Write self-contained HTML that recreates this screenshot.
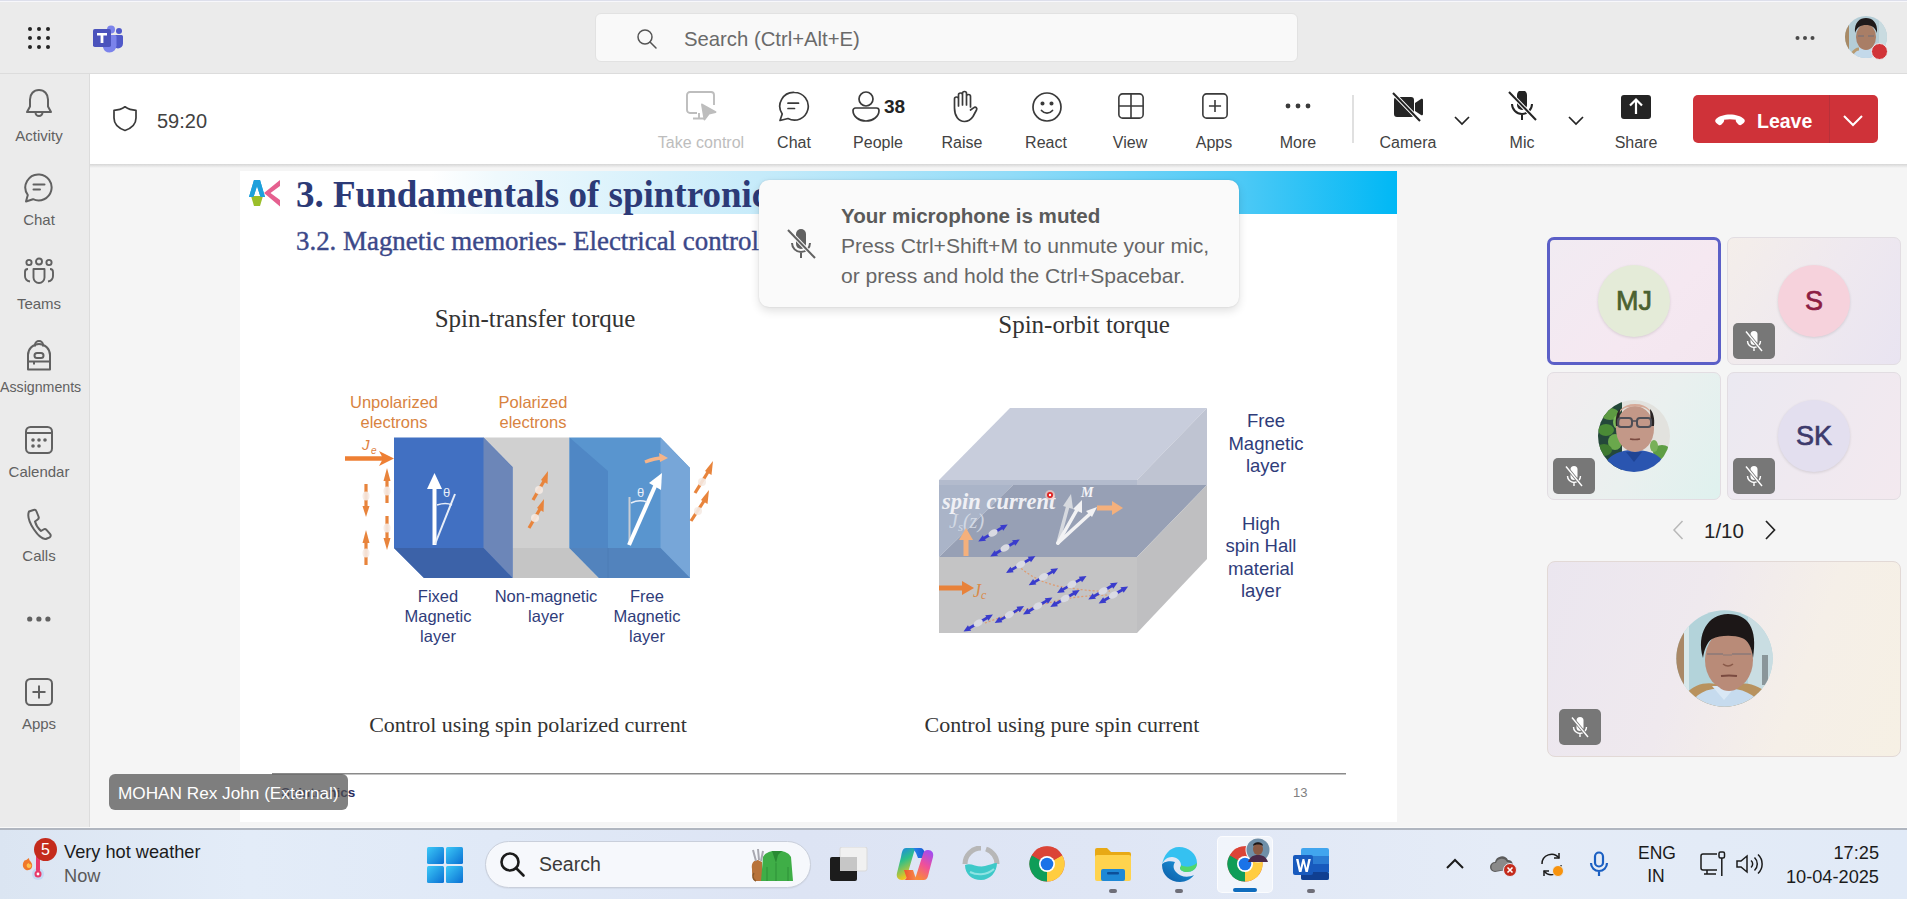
<!DOCTYPE html>
<html><head><meta charset="utf-8">
<style>
*{margin:0;padding:0;box-sizing:border-box}
html,body{width:1907px;height:899px;overflow:hidden;background:#f5f5f5;font-family:"Liberation Sans",sans-serif;position:relative}
.a{position:absolute}
#topline{left:0;top:0;width:1907px;height:2px;background:linear-gradient(#dddfeb 50%,#f7f7fb 50%)}
#topbar{left:0;top:2px;width:1907px;height:71px;background:#ebebeb}
#topborder{left:0;top:73px;width:1907px;height:1px;background:#dcdcdc}
#rail{left:0;top:74px;width:89px;height:754px;background:#ebebeb}
#railborder{left:89px;top:74px;width:1px;height:754px;background:#dcdcdc}
#toolbar{left:90px;top:74px;width:1817px;height:90px;background:#fff}
#tbshadow{left:90px;top:164px;width:1817px;height:4px;background:linear-gradient(#d6d6d6,#f5f5f5)}
#stage{left:90px;top:168px;width:1817px;height:660px;background:#f5f5f5}
#slide{left:240px;top:171px;width:1157px;height:651px;background:#fff;overflow:hidden}
#taskline{left:0;top:827px;width:1907px;height:3px;background:linear-gradient(#f9f9f9 33%,#b0b6c0 33%)}
#taskbar{left:0;top:830px;width:1907px;height:69px;background:linear-gradient(90deg,#dbe5f2 0%,#e3ecf8 13%,#e0e9f7 26%,#dde4f4 42%,#dfe6f5 58%,#e5ecf7 79%,#e1eaf7 100%)}
.lbl{font-size:16px;color:#424242;white-space:nowrap;text-align:center}
.rl{font-size:15px;color:#616161;white-space:nowrap;text-align:center;width:78px;left:0}
</style></head><body>
<div class="a" id="topline"></div>
<div class="a" id="topbar"></div>
<div class="a" id="topborder"></div>
<div class="a" id="rail"></div>
<div class="a" id="railborder"></div>
<div class="a" id="toolbar"></div>
<div class="a" id="tbshadow"></div>
<div class="a" id="stage"></div>
<div class="a" id="slide"></div>
<div class="a" id="taskline"></div>
<div class="a" id="taskbar"></div>

<!-- TOP BAR -->
<svg class="a" style="left:25px;top:24px" width="28" height="28" viewBox="0 0 28 28" fill="#242424">
<circle cx="5" cy="5" r="2"/><circle cx="14" cy="5" r="2"/><circle cx="23" cy="5" r="2"/>
<circle cx="5" cy="14" r="2"/><circle cx="14" cy="14" r="2"/><circle cx="23" cy="14" r="2"/>
<circle cx="5" cy="23" r="2"/><circle cx="14" cy="23" r="2"/><circle cx="23" cy="23" r="2"/>
</svg>
<svg class="a" style="left:92px;top:24px" width="32" height="30" viewBox="0 0 32 30">
<circle cx="19" cy="5.5" r="4" fill="#7b83eb"/>
<circle cx="27" cy="7" r="3" fill="#5059c9"/>
<path d="M21 11h8.5a1.5 1.5 0 0 1 1.5 1.5v7a5 5 0 0 1-5 5h0a5 5 0 0 1-5-5z" fill="#5059c9"/>
<path d="M13 11h10a1.5 1.5 0 0 1 1.5 1.5v9a7 7 0 0 1-7 7a7 7 0 0 1-6.5-5z" fill="#7b83eb"/>
<rect x="1" y="5" width="18" height="18" rx="1.8" fill="#4b53bc"/>
<path d="M5 9h10v2.5h-3.6V19H8.6v-7.5H5z" fill="#fff"/>
</svg>
<div class="a" style="left:595px;top:13px;width:703px;height:49px;background:#f9f9f9;border:1px solid #e2e2e2;border-radius:6px"></div>
<svg class="a" style="left:636px;top:28px" width="22" height="22" viewBox="0 0 22 22" fill="none" stroke="#555" stroke-width="1.5">
<circle cx="9" cy="9" r="7"/><path d="M14 14l6 6" stroke-linecap="round"/>
</svg>
<div class="a" style="left:684px;top:28px;font-size:20.3px;color:#6a6a6a;white-space:nowrap">Search (Ctrl+Alt+E)</div>
<svg class="a" style="left:1793px;top:34px" width="24" height="8" viewBox="0 0 24 8" fill="#4a4a4a">
<circle cx="4.5" cy="4" r="2"/><circle cx="12" cy="4" r="2"/><circle cx="19.5" cy="4" r="2"/>
</svg>
<svg class="a" style="left:1845px;top:16px" width="42" height="42" viewBox="0 0 42 42">
<defs><clipPath id="c0"><circle cx="21" cy="21" r="21"/></clipPath></defs>
<g clip-path="url(#c0)">
<rect width="42" height="42" fill="#b4cdd6"/><rect x="0" y="0" width="4" height="42" fill="#a88a66"/><rect x="34" y="0" width="8" height="42" fill="#c9dbe0"/>
<path d="M4 42C6 34 12 31 21 31S36 34 38 42Z" fill="#c3d9ea"/>
<path d="M7 38C9 35 12 33 14 33" stroke="#b89a70" stroke-width="3" fill="none"/>
<ellipse cx="21" cy="21" rx="10" ry="13" fill="#a97e66"/>
<path d="M10 17C9 6 15 2 21 2S33 6 32 17C30 11 26 9 21 9S12 11 10 17Z" fill="#1f1a1a"/>
<path d="M13 20H19M23 20H29" stroke="#6e6f7a" stroke-width="1"/>
</g></svg>
<div class="a" style="left:1871px;top:43px;width:17px;height:17px;border-radius:50%;background:#d13438;border:1.5px solid #ebebeb"></div>

<!-- LEFT RAIL -->
<svg class="a" style="left:24px;top:88px" width="30" height="32" viewBox="0 0 30 32" fill="none" stroke="#616161" stroke-width="2" stroke-linejoin="round">
<path d="M15 2C9.5 2 6 6.2 6 11.5V18.5L3 24H27L24 18.5V11.5C24 6.2 20.5 2 15 2Z"/><path d="M11.5 24.5a3.5 3.5 0 0 0 7 0"/>
</svg>
<div class="a rl" style="top:127px">Activity</div>
<svg class="a" style="left:23px;top:172px" width="32" height="32" viewBox="0 0 32 32" fill="none" stroke="#616161" stroke-width="2" stroke-linejoin="round" stroke-linecap="round">
<path d="M16.5 2.5A13 13 0 1 1 10 27.2L3 29.5L4.8 23A13 13 0 0 1 16.5 2.5Z"/><path d="M10.5 12.5H21.5M10.5 17.5H17"/>
</svg>
<div class="a rl" style="top:211px">Chat</div>
<svg class="a" style="left:23px;top:257px" width="32" height="30" viewBox="0 0 32 30" fill="none" stroke="#616161" stroke-width="1.9" stroke-linejoin="round">
<circle cx="6" cy="5.5" r="2.6"/><circle cx="16" cy="4.5" r="3"/><circle cx="26" cy="5.5" r="2.6"/>
<path d="M5 12C2.5 12 2 13 2 15v4c0 3 2 5 5 5.5"/><path d="M27 12c2.5 0 3 1 3 3v4c0 3-2 5-5 5.5"/>
<path d="M10.5 12h11v8.5a5.5 5.5 0 0 1-11 0z"/>
</svg>
<div class="a rl" style="top:295px">Teams</div>
<svg class="a" style="left:25px;top:340px" width="28" height="32" viewBox="0 0 28 32" fill="none" stroke="#616161" stroke-width="2" stroke-linejoin="round">
<path d="M10 6.5V5a4 4 0 0 1 8 0v1.5"/><path d="M3 29.5V15a9 9 0 0 1 22 0v14.5z"/><rect x="9.5" y="13" width="9" height="5" rx="2.5"/><path d="M3 21.5H25M9 21.5v3"/>
</svg>
<div class="a rl" style="top:379px;font-size:14.2px">Assignments</div>
<svg class="a" style="left:24px;top:425px" width="30" height="30" viewBox="0 0 30 30" fill="none" stroke="#616161" stroke-width="2">
<rect x="2" y="2" width="26" height="26" rx="4.5"/><path d="M2 8H28"/>
<g fill="#616161" stroke="none"><circle cx="9" cy="15" r="1.8"/><circle cx="15" cy="15" r="1.8"/><circle cx="21" cy="15" r="1.8"/><circle cx="9" cy="21" r="1.8"/><circle cx="15" cy="21" r="1.8"/></g>
</svg>
<div class="a rl" style="top:463px">Calendar</div>
<svg class="a" style="left:25px;top:508px" width="28" height="32" viewBox="0 0 28 32" fill="none" stroke="#616161" stroke-width="2" stroke-linejoin="round">
<path d="M4 3.5L8.5 2c1.5-.5 2.5.2 3 1.5l2 5c.5 1.2.2 2.3-.8 3L10 13.5c.8 3 3.5 7.3 6 9.5l2.5-1.5c1-.6 2.2-.5 3 .4l3.5 4c1 1.1.9 2.5-.2 3.4L22 30.5C19 32 14 29 9 21.5S2.5 7 4 3.5Z"/>
</svg>
<div class="a rl" style="top:547px">Calls</div>
<svg class="a" style="left:25px;top:614px" width="28" height="10" viewBox="0 0 28 10" fill="#616161">
<circle cx="4.7" cy="5" r="2.6"/><circle cx="13.9" cy="5" r="2.6"/><circle cx="22.9" cy="5" r="2.6"/>
</svg>
<svg class="a" style="left:24px;top:677px" width="30" height="30" viewBox="0 0 30 30" fill="none" stroke="#616161" stroke-width="2">
<rect x="2" y="2" width="26" height="26" rx="4.5"/><path d="M15 8.5V21.5M8.5 15H21.5"/>
</svg>
<div class="a rl" style="top:715px">Apps</div>


<!-- TOOLBAR -->
<svg class="a" style="left:112px;top:105px" width="26" height="27" viewBox="0 0 26 27" fill="none" stroke="#3a3a3a" stroke-width="1.7" stroke-linejoin="round">
<path d="M13 1.8C9.5 4.3 6 5.2 2 5.3V13c0 6 4 10 11 12.5C20 23 24 19 24 13V5.3C20 5.2 16.5 4.3 13 1.8Z"/>
</svg>
<div class="a" style="left:157px;top:110px;font-size:20px;color:#424242;white-space:nowrap">59:20</div>

<svg class="a" style="left:685px;top:90px" width="34" height="34" viewBox="0 0 34 34" fill="none" stroke="#bdbdbd" stroke-width="1.9" stroke-linejoin="round">
<path d="M12 23H5a3 3 0 0 1-3-3V5a3 3 0 0 1 3-3h21a3 3 0 0 1 3 3v10"/><path d="M14 23v5M8 28.5h12"/>
<path d="M17 14.5l13.5 7.5l-6.5 1.5l-4.5 6z" fill="#bdbdbd"/>
</svg>
<div class="a lbl" style="left:651px;top:134px;width:100px;color:#bdbdbd">Take control</div>

<svg class="a" style="left:778px;top:91px" width="32" height="32" viewBox="0 0 32 32" fill="none" stroke="#3a3a3a" stroke-width="1.7" stroke-linejoin="round" stroke-linecap="round">
<path d="M16.5 1.5A13.8 13.8 0 1 1 10 27.5L2 29.5L4.2 23A13.8 13.8 0 0 1 16.5 1.5Z"/><path d="M10 12.2H20.5M10 17.5H16.5"/>
</svg>
<div class="a lbl" style="left:744px;top:134px;width:100px">Chat</div>

<svg class="a" style="left:851px;top:91px" width="30" height="32" viewBox="0 0 30 32" fill="none" stroke="#3a3a3a" stroke-width="1.7" stroke-linejoin="round">
<circle cx="15" cy="8" r="7"/><path d="M2 19.5a2.5 2.5 0 0 1 2.5-2.5h21a2.5 2.5 0 0 1 2.5 2.5c0 6-6 10.5-13 10.5S2 25.5 2 19.5Z"/>
</svg>
<div class="a" style="left:884px;top:96px;font-size:19px;font-weight:700;color:#242424;white-space:nowrap">38</div>
<div class="a lbl" style="left:828px;top:134px;width:100px">People</div>

<svg class="a" style="left:949px;top:90px;transform:scaleX(-1)" width="30" height="34" viewBox="0 0 30 34" fill="none" stroke="#3a3a3a" stroke-width="1.7" stroke-linejoin="round" stroke-linecap="round">
<path d="M8.5 17V6.5a2 2 0 0 1 4 0V15M12.5 15V3.5a2 2 0 0 1 4 0V15M16.5 15V5a2 2 0 0 1 4 0V16M20.5 16V9a2 2 0 0 1 4 0v9c0 8-4 13.5-10 13.5c-4 0-6.5-2-8.5-5L2.5 20c-1-1.6.5-3.3 2.2-2.6L8.5 20"/>
</svg>
<div class="a lbl" style="left:912px;top:134px;width:100px">Raise</div>

<svg class="a" style="left:1031px;top:91px" width="32" height="32" viewBox="0 0 32 32" fill="none" stroke="#3a3a3a" stroke-width="1.7" stroke-linecap="round">
<circle cx="16" cy="16" r="14"/><path d="M10.5 19.5c3 3.5 8 3.5 11 0"/><circle cx="11.5" cy="12.5" r="1.2" fill="#3a3a3a"/><circle cx="20.5" cy="12.5" r="1.2" fill="#3a3a3a"/>
</svg>
<div class="a lbl" style="left:996px;top:134px;width:100px">React</div>

<svg class="a" style="left:1117px;top:92px" width="28" height="28" viewBox="0 0 30 30" fill="none" stroke="#3a3a3a" stroke-width="1.7">
<rect x="2" y="2" width="26" height="26" rx="4"/><path d="M15 2V28M2 15H28"/>
</svg>
<div class="a lbl" style="left:1080px;top:134px;width:100px">View</div>

<svg class="a" style="left:1201px;top:92px" width="28" height="28" viewBox="0 0 30 30" fill="none" stroke="#3a3a3a" stroke-width="1.7">
<rect x="2" y="2" width="26" height="26" rx="4"/><path d="M15 8.5V21.5M8.5 15H21.5"/>
</svg>
<div class="a lbl" style="left:1164px;top:134px;width:100px">Apps</div>

<svg class="a" style="left:1284px;top:102px" width="28" height="8" viewBox="0 0 28 8" fill="#3a3a3a">
<circle cx="4" cy="4" r="2.4"/><circle cx="14" cy="4" r="2.4"/><circle cx="24" cy="4" r="2.4"/>
</svg>
<div class="a lbl" style="left:1248px;top:134px;width:100px">More</div>

<div class="a" style="left:1352px;top:95px;width:2px;height:48px;background:#e0e0e0"></div>

<svg class="a" style="left:1391px;top:92px" width="34" height="30" viewBox="0 0 34 30">
<path d="M3 8a3 3 0 0 1 3-3h14a3 3 0 0 1 3 3v14a3 3 0 0 1-3 3H6a3 3 0 0 1-3-3zM24 11l6-4c1-.6 2 0 2 1v14c0 1-1 1.6-2 1l-6-4z" fill="#242424"/>
<path d="M2 1L29 29" stroke="#fff" stroke-width="4"/><path d="M2 1L29 29" stroke="#242424" stroke-width="2"/>
</svg>
<svg class="a" style="left:1453px;top:115px" width="18" height="11" viewBox="0 0 18 11" fill="none" stroke="#242424" stroke-width="1.7"><path d="M2 2l7 7l7-7"/></svg>
<div class="a lbl" style="left:1358px;top:134px;width:100px">Camera</div>

<svg class="a" style="left:1506px;top:91px" width="32" height="32" viewBox="0 0 32 32">
<path d="M11 4a5 5 0 0 1 10 0v10a5 5 0 0 1-10 0z" fill="#242424"/>
<path d="M6 13a10 10 0 0 0 20 0M16 23v6" fill="none" stroke="#242424" stroke-width="2"/>
<path d="M3 1L30 29" stroke="#fff" stroke-width="4"/><path d="M3 1L30 29" stroke="#242424" stroke-width="2"/>
</svg>
<svg class="a" style="left:1567px;top:115px" width="18" height="11" viewBox="0 0 18 11" fill="none" stroke="#242424" stroke-width="1.7"><path d="M2 2l7 7l7-7"/></svg>
<div class="a lbl" style="left:1472px;top:134px;width:100px">Mic</div>

<svg class="a" style="left:1620px;top:94px" width="32" height="26" viewBox="0 0 32 26">
<rect x="1" y="1" width="30" height="24" rx="3" fill="#242424"/><path d="M16 20V6M10 11.5l6-6l6 6" fill="none" stroke="#fff" stroke-width="2.2"/>
</svg>
<div class="a lbl" style="left:1586px;top:134px;width:100px">Share</div>

<div class="a" style="left:1693px;top:95px;width:185px;height:48px;background:#cf3239;border-radius:5px"></div>
<div class="a" style="left:1829px;top:95px;width:1px;height:48px;background:#b8313a"></div>
<svg class="a" style="left:1714px;top:111px" width="32" height="18" viewBox="0 0 32 18">
<path d="M2 8C8 2 24 2 30 8c1.2 1.2 1 3-.3 4l-2 1.6c-1 .8-2.4.7-3.3-.2l-2-2.2c-.6-.7-.8-1.6-.5-2.4C18 8 14 8 10 8.8c.3.8.1 1.7-.5 2.4l-2 2.2c-.9.9-2.3 1-3.3.2L2.3 12C1 11 .8 9.2 2 8Z" fill="#fff"/>
</svg>
<div class="a" style="left:1757px;top:110px;font-size:19.5px;font-weight:700;color:#fff;white-space:nowrap">Leave</div>
<svg class="a" style="left:1842px;top:114px" width="22" height="14" viewBox="0 0 22 14" fill="none" stroke="#fff" stroke-width="2"><path d="M2 2l9 9l9-9"/></svg>


<!-- SLIDE -->
<svg class="a" style="left:240px;top:171px" width="1157" height="651" viewBox="240 171 1157 651">
<defs>
<linearGradient id="tband" x1="0" x2="1" y1="0" y2="0">
<stop offset="0" stop-color="#ffffff"/><stop offset="0.07" stop-color="#eff9fd"/><stop offset="0.34" stop-color="#c6ebfa"/><stop offset="0.6" stop-color="#92dcf8"/><stop offset="0.84" stop-color="#4cc9f6"/><stop offset="1" stop-color="#00b8f5"/>
</linearGradient>
<marker id="oh" markerWidth="4" markerHeight="4" refX="2" refY="2" orient="auto"><path d="M0 0L4 2L0 4z" fill="#e8823a"/></marker>
</defs>
<rect x="240" y="171" width="1157" height="651" fill="#fff"/>
<rect x="430" y="171" width="967" height="43" fill="url(#tband)"/>
<!-- logo -->
<path d="M249 197L254 180H260L265 197H260.5L257 186L253.5 197Z" fill="#1ea0dc"/>
<path d="M251 196H263L260 206H254Z" fill="#9bbf2a"/>
<path d="M249 197L254 180H260L265 197H260.5L257 186L253.5 197Z" fill="#1ea0dc"/>
<path d="M280 180V186L270.5 193L280 200V206.5L264 193Z" fill="#e5608f"/>
<text x="296" y="207" font-family="Liberation Serif" font-weight="700" font-size="37" fill="#2c3a77">3. Fundamentals of spintronics</text>
<text x="296" y="249.5" font-family="Liberation Serif" font-size="26.9" fill="#3b4889" stroke="#3b4889" stroke-width="0.4">3.2. Magnetic memories- Electrical control</text>
<text x="535" y="327" text-anchor="middle" font-family="Liberation Serif" font-size="25" fill="#333">Spin-transfer torque</text>
<text x="1084" y="333" text-anchor="middle" font-family="Liberation Serif" font-size="25" fill="#333">Spin-orbit torque</text>
<text x="528" y="732" text-anchor="middle" font-family="Liberation Serif" font-size="22" fill="#333">Control using spin polarized current</text>
<text x="1062" y="732" text-anchor="middle" font-family="Liberation Serif" font-size="22" fill="#333">Control using pure spin current</text>
<rect x="272" y="773" width="1074" height="1.5" fill="#8a8a8a"/>
<text x="281" y="797" font-family="Liberation Sans" font-weight="700" font-size="13.5" fill="#2a2c5e">Spintronics</text>
<text x="1293" y="797" font-family="Liberation Sans" font-size="13" fill="#808080">13</text>

<!-- LEFT FIGURE -->
<g font-family="Liberation Sans" font-size="16.5" text-anchor="middle">
<text x="394" y="408" fill="#d8833f">Unpolarized</text><text x="394" y="428" fill="#d8833f">electrons</text>
<text x="533" y="408" fill="#d8833f">Polarized</text><text x="533" y="428" fill="#d8833f">electrons</text>
<text x="438" y="602" fill="#2f3c7a">Fixed</text><text x="438" y="622" fill="#2f3c7a">Magnetic</text><text x="438" y="642" fill="#2f3c7a">layer</text>
<text x="546" y="602" fill="#2f3c7a">Non-magnetic</text><text x="546" y="622" fill="#2f3c7a">layer</text>
<text x="647" y="602" fill="#2f3c7a">Free</text><text x="647" y="622" fill="#2f3c7a">Magnetic</text><text x="647" y="642" fill="#2f3c7a">layer</text>
</g>
<!-- gray nonmagnetic -->
<path d="M483 437.5H569.5V548L599 578H512.5Z" fill="#d0d0d0"/>
<path d="M512.5 548H569.5L599 578H512.5Z" fill="#c5c5c5"/>
<!-- fixed block -->
<path d="M394 437.5H483.5L512.5 467V578H424L394 548Z" fill="#4170c2"/>
<path d="M483.5 437.5L512.5 467V578L483.5 548Z" fill="#6c86b8"/>
<path d="M394 548H483.5L512.5 578H424Z" fill="#3c62a8"/>
<!-- free block -->
<path d="M569.5 437.5H660.5L690 468V578H599L569.5 548Z" fill="#5995cf"/>
<path d="M569.5 437.5L608 471V578L569.5 548Z" fill="#4f87c5"/>
<path d="M660.5 437.5L690 468V578L660.5 548Z" fill="#77a6d8"/>
<path d="M569.5 548H660.5L690 578H599Z" fill="#5283bd"/>
<path d="M608 548V578" stroke="#4c7cb5" stroke-width="1"/>
<!-- Je arrow -->
<path d="M345 458.5H388" stroke="#ee7f33" stroke-width="4.5"/><path d="M379 451L394 458.5L379 466L383 458.5Z" fill="#ee7f33"/>
<text x="362" y="450" font-family="Liberation Sans" font-style="italic" font-size="15" fill="#e0823f">J</text><text x="371" y="454" font-family="Liberation Sans" font-style="italic" font-size="10" fill="#e0823f">e</text>
<!-- fixed arrow -->
<path d="M434.5 545V484" stroke="#fff" stroke-width="4"/><path d="M427 489L434.5 473L442 489Z" fill="#fff"/>
<path d="M435 544L455 494" stroke="#e8eef8" stroke-width="2"/>
<path d="M437 505Q446 502 452 505" stroke="#e8eef8" stroke-width="1.5" fill="none"/>
<text x="443" y="497" font-family="Liberation Sans" font-size="13" fill="#e8eef8">θ</text>
<!-- free arrow -->
<path d="M629.5 545V497" stroke="#c7ccd4" stroke-width="2"/>
<path d="M629 545L656 484" stroke="#fff" stroke-width="4"/><path d="M649 483L662 473L661 490Z" fill="#fff"/>
<path d="M631 503Q639 499 647 502" stroke="#e8eef8" stroke-width="1.5" fill="none"/>
<text x="637" y="497" font-family="Liberation Sans" font-size="13" fill="#e8eef8">θ</text>
<path d="M645 462Q655 458 663 458" stroke="#f5b489" stroke-width="3.5" fill="none"/><path d="M659 453L668 458L660 462Z" fill="#f5b489"/>
<!-- spins -->
<g stroke="#e8843c" stroke-width="3.2" fill="none">
<path d="M366 484V508"/><path d="M366 565V541"/><path d="M387 503V479"/><path d="M387 516V540"/>
<path d="M533 500L544 481"/><path d="M529 528L540 509"/><path d="M695 493L708 472"/><path d="M691 521L704 501"/>
</g>
<g fill="#e8843c">
<path d="M362.5 506L366 517L369.5 506Z"/><path d="M362.5 543L366 530L369.5 543Z"/><path d="M383.5 481L387 468L390.5 481Z"/><path d="M383.5 538L387 550L390.5 538Z"/>
<path d="M541 480L548 471L547.5 484Z"/><path d="M537 508L544 499L543.5 512Z"/><path d="M705 471L713 461L711.5 475Z"/><path d="M701 500L709 490L707.5 504Z"/>
</g>
<g fill="#f6ebe4" opacity="0.9">
<ellipse cx="366" cy="496" rx="3.5" ry="4.5"/><ellipse cx="366" cy="553" rx="3.5" ry="4.5"/><ellipse cx="387" cy="491" rx="3.5" ry="4.5"/><ellipse cx="387" cy="528" rx="3.5" ry="4.5"/>
<circle cx="539" cy="490" r="4"/><circle cx="535" cy="518" r="4"/><circle cx="702" cy="482" r="4"/><circle cx="698" cy="511" r="4"/>
</g>
</svg>


<!-- RIGHT FIGURE -->
<svg class="a" style="left:900px;top:380px" width="440" height="280" viewBox="900 380 440 280">
<defs>
<marker id="dum" markerWidth="1" markerHeight="1"></marker>
</defs>
<!-- top face -->
<path d="M939 480L1010 408H1207L1137 480Z" fill="#c8cddc"/>
<path d="M1137 480L1207 408V485H1137Z" fill="#bfc4d2"/>
<path d="M939 480H1137V485H939Z" fill="#b3bbcd"/>
<path d="M939 485H1013L939 557Z" fill="#aab4c8"/>
<path d="M1013 485H1207L1137 557H939Z" fill="#97a0b5"/>
<path d="M1137 557L1207 485V559L1137 633Z" fill="#bfbfc1"/>
<path d="M939 557H1137V633H939Z" fill="#c4c4c5"/>
<g font-family="Liberation Sans" font-size="18.5" text-anchor="middle" fill="#2f3c7a">
<text x="1266" y="427">Free</text><text x="1266" y="450">Magnetic</text><text x="1266" y="472">layer</text>
<text x="1261" y="530">High</text><text x="1261" y="552">spin Hall</text><text x="1261" y="575">material</text><text x="1261" y="597">layer</text>
</g>
<text x="942" y="509" font-family="Liberation Serif" font-style="italic" font-weight="700" font-size="22.5" fill="#f4f4f8" opacity="0.95">spin current</text>
<text x="949" y="528" font-family="Liberation Serif" font-style="italic" font-size="20" fill="#dde2ec" opacity="0.8">J<tspan font-size="13" dy="3">s</tspan><tspan dy="-3">(z)</tspan></text>
<!-- orange arrows -->
<path d="M966 556V538" stroke="#f4b07c" stroke-width="5"/><path d="M959 540L966 528L973 540Z" fill="#f4b07c"/>
<path d="M939 588H964" stroke="#e8823a" stroke-width="5"/><path d="M962 581L974 588L962 595Z" fill="#e8823a"/>
<text x="973" y="597" font-family="Liberation Serif" font-style="italic" font-size="18" fill="#d98a4a">J<tspan font-size="12" dy="2">c</tspan></text>
<path d="M1097 508H1114" stroke="#f4b07c" stroke-width="5"/><path d="M1112 501L1123 508L1112 515Z" fill="#f4b07c"/>
<!-- M arrows -->
<g stroke="#f2f2f4" stroke-width="3.5" fill="none" stroke-linecap="round">
<path d="M1058 543L1069 502" stroke="#d6d9df"/><path d="M1058 543L1078 508"/><path d="M1058 543L1092 512"/>
</g>
<g fill="#f2f2f4"><path d="M1063 506L1071 494L1073 509Z" fill="#d6d9df"/><path d="M1073 509L1082 500L1082 513Z"/><path d="M1086 511L1097 507L1092 517Z"/></g>
<text x="1081" y="497" font-family="Liberation Serif" font-style="italic" font-weight="700" font-size="14" fill="#f4f4f8">M</text>
<circle cx="1050" cy="495" r="5" fill="#f7c7c0" opacity="0.7"/><circle cx="1050" cy="495" r="3" fill="#e02020"/><circle cx="1050" cy="495" r="1.2" fill="#fff"/>
<!-- dotted paths -->
<g stroke="#e6915a" stroke-width="1.2" stroke-dasharray="2 2" fill="none" opacity="0.8">
<path d="M1018 566Q1040 585 1070 588Q1095 592 1110 591"/>
<path d="M985 623Q1020 610 1060 600Q1085 595 1110 595"/>
</g>
<!-- spins -->
<g id="sp">
</g>
<g transform="translate(993 533) rotate(-30)"><path d="M-13 0H13" stroke="#3a3ccc" stroke-width="2.6"/><path d="M10 -3.2L17 0L10 3.2Z" fill="#3a3ccc"/><path d="M-10 -3.2L-17 0L-10 3.2Z" fill="#3a3ccc"/><ellipse cx="0" cy="0" rx="5" ry="3.3" fill="#d9dae2"/></g>
<g transform="translate(1005 548) rotate(-30)"><path d="M-13 0H13" stroke="#3a3ccc" stroke-width="2.6"/><path d="M10 -3.2L17 0L10 3.2Z" fill="#3a3ccc"/><path d="M-10 -3.2L-17 0L-10 3.2Z" fill="#3a3ccc"/><ellipse cx="0" cy="0" rx="5" ry="3.3" fill="#d9dae2"/></g>
<g transform="translate(1020.7 564.5) rotate(-30)"><path d="M-13 0H13" stroke="#3a3ccc" stroke-width="2.6"/><path d="M10 -3.2L17 0L10 3.2Z" fill="#3a3ccc"/><path d="M-10 -3.2L-17 0L-10 3.2Z" fill="#3a3ccc"/><ellipse cx="0" cy="0" rx="5" ry="3.3" fill="#d9dae2"/></g>
<g transform="translate(1043.4 576.8) rotate(-30)"><path d="M-13 0H13" stroke="#3a3ccc" stroke-width="2.6"/><path d="M10 -3.2L17 0L10 3.2Z" fill="#3a3ccc"/><path d="M-10 -3.2L-17 0L-10 3.2Z" fill="#3a3ccc"/><ellipse cx="0" cy="0" rx="5" ry="3.3" fill="#d9dae2"/></g>
<g transform="translate(1071.8 584.4) rotate(-30)"><path d="M-13 0H13" stroke="#3a3ccc" stroke-width="2.6"/><path d="M10 -3.2L17 0L10 3.2Z" fill="#3a3ccc"/><path d="M-10 -3.2L-17 0L-10 3.2Z" fill="#3a3ccc"/><ellipse cx="0" cy="0" rx="5" ry="3.3" fill="#d9dae2"/></g>
<g transform="translate(1103 591) rotate(-30)"><path d="M-13 0H13" stroke="#3a3ccc" stroke-width="2.6"/><path d="M10 -3.2L17 0L10 3.2Z" fill="#3a3ccc"/><path d="M-10 -3.2L-17 0L-10 3.2Z" fill="#3a3ccc"/><ellipse cx="0" cy="0" rx="5" ry="3.3" fill="#d9dae2"/></g>
<g transform="translate(1113.4 595) rotate(-30)"><path d="M-13 0H13" stroke="#3a3ccc" stroke-width="2.6"/><path d="M10 -3.2L17 0L10 3.2Z" fill="#3a3ccc"/><path d="M-10 -3.2L-17 0L-10 3.2Z" fill="#3a3ccc"/><ellipse cx="0" cy="0" rx="5" ry="3.3" fill="#d9dae2"/></g>
<g transform="translate(1065 598.5) rotate(-30)"><path d="M-13 0H13" stroke="#3a3ccc" stroke-width="2.6"/><path d="M10 -3.2L17 0L10 3.2Z" fill="#3a3ccc"/><path d="M-10 -3.2L-17 0L-10 3.2Z" fill="#3a3ccc"/><ellipse cx="0" cy="0" rx="5" ry="3.3" fill="#d9dae2"/></g>
<g transform="translate(1037.7 606) rotate(-30)"><path d="M-13 0H13" stroke="#3a3ccc" stroke-width="2.6"/><path d="M10 -3.2L17 0L10 3.2Z" fill="#3a3ccc"/><path d="M-10 -3.2L-17 0L-10 3.2Z" fill="#3a3ccc"/><ellipse cx="0" cy="0" rx="5" ry="3.3" fill="#d9dae2"/></g>
<g transform="translate(1009.4 614.6) rotate(-30)"><path d="M-13 0H13" stroke="#3a3ccc" stroke-width="2.6"/><path d="M10 -3.2L17 0L10 3.2Z" fill="#3a3ccc"/><path d="M-10 -3.2L-17 0L-10 3.2Z" fill="#3a3ccc"/><ellipse cx="0" cy="0" rx="5" ry="3.3" fill="#d9dae2"/></g>
<g transform="translate(978.2 623) rotate(-30)"><path d="M-13 0H13" stroke="#3a3ccc" stroke-width="2.6"/><path d="M10 -3.2L17 0L10 3.2Z" fill="#3a3ccc"/><path d="M-10 -3.2L-17 0L-10 3.2Z" fill="#3a3ccc"/><ellipse cx="0" cy="0" rx="5" ry="3.3" fill="#d9dae2"/></g>
</svg>


<!-- TOAST -->
<div class="a" style="left:759px;top:180px;width:480px;height:127px;background:#fafafa;border-radius:10px;box-shadow:0 4px 10px rgba(0,0,0,0.12),0 0 2px rgba(0,0,0,0.12)"></div>
<svg class="a" style="left:784px;top:227px" width="34" height="34" viewBox="0 0 34 34">
<path d="M12 7a5 5 0 0 1 10 0v10a5 5 0 0 1-10 0z" fill="#616161"/>
<path d="M8 16a9 9 0 0 0 18 0M17 25v6" fill="none" stroke="#616161" stroke-width="2"/>
<path d="M4 3L31 31" stroke="#fafafa" stroke-width="4"/><path d="M4 3L31 31" stroke="#616161" stroke-width="2"/>
</svg>
<div class="a" style="left:841px;top:204px;font-size:20.6px;font-weight:700;color:#5a5a5a;white-space:nowrap">Your microphone is muted</div>
<div class="a" style="left:841px;top:231px;font-size:21.1px;color:#666;white-space:nowrap;line-height:30px">Press Ctrl+Shift+M to unmute your mic,<br>or press and hold the Ctrl+Spacebar.</div>

<!-- NAME TAG -->
<div class="a" style="left:109px;top:774px;width:239px;height:36px;background:rgba(80,80,80,0.72);border-radius:6px"></div>
<div class="a" style="left:118px;top:783px;font-size:17.2px;color:#fff;white-space:nowrap">MOHAN Rex John (External)</div>


<!-- RIGHT PANEL -->
<div class="a" style="left:1547px;top:237px;width:174px;height:128px;border-radius:7px;background:linear-gradient(135deg,#f1ebf2,#f5e8f1 60%,#f3e6ef);border:3px solid #5b5fc7"></div>
<div class="a" style="left:1727px;top:237px;width:174px;height:128px;border-radius:7px;background:linear-gradient(120deg,#f4eeea,#efe9ef 50%,#e9e4f1);border:1px solid #e2dde2"></div>
<div class="a" style="left:1547px;top:372px;width:174px;height:128px;border-radius:7px;background:linear-gradient(120deg,#f2ecef,#eaf0ef 55%,#dff1ee);border:1px solid #e2dde2"></div>
<div class="a" style="left:1727px;top:372px;width:174px;height:128px;border-radius:7px;background:linear-gradient(120deg,#ebe9f1,#efe9f0 50%,#f3e9ef);border:1px solid #e2dde2"></div>
<div class="a" style="left:1547px;top:561px;width:354px;height:196px;border-radius:8px;background:linear-gradient(110deg,#ebe6ef,#efe9ee 40%,#f5efe8 70%,#f6f0e4);border:1px solid #e2d9d6"></div>

<div class="a" style="left:1598px;top:265px;width:72px;height:72px;border-radius:50%;background:#e4ebd8;box-shadow:0 1px 3px rgba(0,0,0,0.12);color:#4a6130;font-size:27px;font-weight:400;-webkit-text-stroke:0.7px #4a6130;text-align:center;line-height:72px">MJ</div>
<div class="a" style="left:1778px;top:265px;width:72px;height:72px;border-radius:50%;background:#f6d2dc;box-shadow:0 1px 3px rgba(0,0,0,0.12);color:#8c1d43;font-size:27px;font-weight:400;-webkit-text-stroke:0.7px #8c1d43;text-align:center;line-height:72px">S</div>
<div class="a" style="left:1778px;top:400px;width:72px;height:72px;border-radius:50%;background:#e3dfef;box-shadow:0 1px 3px rgba(0,0,0,0.12);color:#3d3a6c;font-size:27px;font-weight:400;-webkit-text-stroke:0.7px #3d3a6c;text-align:center;line-height:72px">SK</div>

<!-- photo avatar 1 -->
<svg class="a" style="left:1598px;top:400px" width="72" height="72" viewBox="0 0 72 72">
<defs><clipPath id="c1"><circle cx="36" cy="36" r="36"/></clipPath></defs>
<g clip-path="url(#c1)">
<rect width="72" height="72" fill="#e2e2de"/>
<path d="M0 0H24V72H0Z" fill="#24483a"/>
<ellipse cx="12" cy="14" rx="9" ry="6" fill="#5d9a42"/><ellipse cx="8" cy="30" rx="8" ry="6" fill="#4a8a36"/><ellipse cx="17" cy="42" rx="7" ry="8" fill="#6aa84c"/><ellipse cx="6" cy="50" rx="8" ry="6" fill="#3f7a30"/><ellipse cx="20" cy="22" rx="5" ry="7" fill="#7bb85a"/>
<ellipse cx="64" cy="52" rx="9" ry="7" fill="#5e9e44"/><ellipse cx="56" cy="46" rx="4" ry="6" fill="#78b058"/>
<path d="M4 72C6 58 18 50 36 50S66 56 70 72Z" fill="#2a55b0"/>
<path d="M28 52L36 62L44 52" fill="#1f4494"/>
<ellipse cx="37" cy="29" rx="19" ry="23" fill="#c39888"/>
<path d="M18 24C18 12 24 4 37 4S56 12 56 24C55 16 52 10 47 8C42 6 32 6 27 8C22 10 19 16 18 24Z" fill="#d6aa98"/>
<path d="M18 26C17 18 19 12 22 9L21 26Z M56 26C57 18 55 12 52 9L53 26Z" fill="#2a2424"/>
<rect x="20" y="18" width="14" height="9" rx="3" fill="none" stroke="#4e4e56" stroke-width="2"/><rect x="39" y="18" width="14" height="9" rx="3" fill="none" stroke="#4e4e56" stroke-width="2"/><path d="M34 21H39" stroke="#4e4e56" stroke-width="1.6"/>
<path d="M32 39Q37 40 42 39" stroke="#7a4a40" stroke-width="1.6" fill="none"/>
</g></svg>

<!-- mute badges -->
<div class="a" style="left:1733px;top:323px"><svg width="42" height="36" viewBox="0 0 42 36"><rect width="42" height="36" rx="5" fill="#777"/><path d="M17.5 11.5a3.5 3.5 0 0 1 7 0v7a3.5 3.5 0 0 1-7 0z" fill="#fff"/><path d="M14.5 18a6.5 6.5 0 0 0 13 0M21 24.5v3.5" fill="none" stroke="#fff" stroke-width="1.4"/><path d="M13 8.5L29 28" stroke="#777" stroke-width="3"/><path d="M13 8.5L29 28" stroke="#fff" stroke-width="1.4"/></svg></div>
<div class="a" style="left:1553px;top:458px"><svg width="42" height="36" viewBox="0 0 42 36"><rect width="42" height="36" rx="5" fill="#777"/><path d="M17.5 11.5a3.5 3.5 0 0 1 7 0v7a3.5 3.5 0 0 1-7 0z" fill="#fff"/><path d="M14.5 18a6.5 6.5 0 0 0 13 0M21 24.5v3.5" fill="none" stroke="#fff" stroke-width="1.4"/><path d="M13 8.5L29 28" stroke="#777" stroke-width="3"/><path d="M13 8.5L29 28" stroke="#fff" stroke-width="1.4"/></svg></div>
<div class="a" style="left:1733px;top:458px"><svg width="42" height="36" viewBox="0 0 42 36"><rect width="42" height="36" rx="5" fill="#777"/><path d="M17.5 11.5a3.5 3.5 0 0 1 7 0v7a3.5 3.5 0 0 1-7 0z" fill="#fff"/><path d="M14.5 18a6.5 6.5 0 0 0 13 0M21 24.5v3.5" fill="none" stroke="#fff" stroke-width="1.4"/><path d="M13 8.5L29 28" stroke="#777" stroke-width="3"/><path d="M13 8.5L29 28" stroke="#fff" stroke-width="1.4"/></svg></div>
<div class="a" style="left:1559px;top:709px"><svg width="42" height="36" viewBox="0 0 42 36"><rect width="42" height="36" rx="5" fill="#777"/><path d="M17.5 11.5a3.5 3.5 0 0 1 7 0v7a3.5 3.5 0 0 1-7 0z" fill="#fff"/><path d="M14.5 18a6.5 6.5 0 0 0 13 0M21 24.5v3.5" fill="none" stroke="#fff" stroke-width="1.4"/><path d="M13 8.5L29 28" stroke="#777" stroke-width="3"/><path d="M13 8.5L29 28" stroke="#fff" stroke-width="1.4"/></svg></div>

<svg class="a" style="left:1671px;top:519px" width="14" height="22" viewBox="0 0 14 22" fill="none" stroke="#b8b8b8" stroke-width="1.5"><path d="M11.5 2L3 11L11.5 20"/></svg>
<div class="a" style="left:1704px;top:519px;font-size:20.5px;color:#242424;white-space:nowrap">1/10</div>
<svg class="a" style="left:1764px;top:519px" width="14" height="22" viewBox="0 0 14 22" fill="none" stroke="#242424" stroke-width="1.7"><path d="M2 2L10.5 11L2 20"/></svg>

<!-- photo avatar 2 -->
<svg class="a" style="left:1676px;top:610px" width="97" height="97" viewBox="0 0 97 97">
<defs><clipPath id="c2"><circle cx="48.5" cy="48.5" r="48.2"/></clipPath></defs>
<g clip-path="url(#c2)">
<rect width="97" height="97" fill="#b3d3da"/>
<rect x="0" y="0" width="8" height="97" fill="#a98866"/><rect x="8" y="0" width="5" height="97" fill="#d8e8ea"/>
<rect x="72" y="0" width="25" height="97" fill="#c9dde2"/><rect x="86" y="45" width="6" height="30" fill="#8a969a"/>
<path d="M10 84C18 74 30 72 40 74H58C68 72 82 74 92 84V97H10Z" fill="#b8925e"/>
<path d="M14 97C18 84 30 78 48 78S80 84 86 97Z" fill="#c6dbee"/>
<path d="M36 76L48 90L60 76" fill="#d9e8f5"/>
<ellipse cx="53" cy="50" rx="24" ry="30" fill="#b98b78"/>
<path d="M44 78C48 82 58 82 62 78V70H44Z" fill="#b98b78"/>
<path d="M27 48C20 24 32 4 52 4S82 18 77 48C76 38 72 30 66 28C58 25 44 25 36 29C31 32 28 40 27 48Z" fill="#1c1717"/>
<path d="M31 44H47M56 44H75" stroke="#8a7a78" stroke-width="1.6"/><path d="M47 45H56" stroke="#8a7a78" stroke-width="1.2"/>
<path d="M47 54Q52 58 57 54" stroke="#8a5a4a" stroke-width="1.6" fill="none"/>
<path d="M45 66Q53 65 61 66" stroke="#7a4a40" stroke-width="2" fill="none"/>
</g></svg>


<!-- TASKBAR -->
<svg class="a" style="left:16px;top:838px" width="44" height="46" viewBox="0 0 44 46">
<path d="M9 22c-3 3-3 8 1 10c4 1 7-2 6-6c-1-3-3-3-3-6c-2 1-3 3-4 2z" fill="#f0782a"/><path d="M11 26c-1 2 0 4 2 4s3-2 2-4c-1 1-2 0-2-1z" fill="#ffc04a"/>
<circle cx="22" cy="36" r="6" fill="#b9d1f2" opacity="0.7"/>
<rect x="20" y="14" width="4" height="20" rx="2" fill="#e83a6a"/><circle cx="22" cy="36" r="3.5" fill="#e83a6a"/><circle cx="22" cy="36" r="1.4" fill="#fff"/>
</svg>
<div class="a" style="left:34px;top:838px;width:23px;height:23px;border-radius:50%;background:#c42b1c;color:#fff;font-size:16px;text-align:center;line-height:23px">5</div>
<div class="a" style="left:64px;top:842px;font-size:18.2px;color:#1b1b1b;white-space:nowrap">Very hot weather</div>
<div class="a" style="left:64px;top:866px;font-size:18.2px;color:#5a5a5a;white-space:nowrap">Now</div>

<svg class="a" style="left:427px;top:847px" width="36" height="36" viewBox="0 0 36 36">
<defs><linearGradient id="wg" x1="0" y1="0" x2="1" y2="1"><stop offset="0" stop-color="#3cc9f7"/><stop offset="1" stop-color="#0a6fd3"/></linearGradient></defs>
<rect x="0" y="0" width="17" height="17" rx="1.5" fill="url(#wg)"/><rect x="19" y="0" width="17" height="17" rx="1.5" fill="url(#wg)"/>
<rect x="0" y="19" width="17" height="17" rx="1.5" fill="url(#wg)"/><rect x="19" y="19" width="17" height="17" rx="1.5" fill="url(#wg)"/>
</svg>
<div class="a" style="left:485px;top:841px;width:326px;height:47px;border-radius:24px;background:#f6f8fc;border:1px solid #c9cfdb;box-shadow:0 1px 1px rgba(0,0,0,0.05)"></div>
<svg class="a" style="left:499px;top:851px" width="27" height="27" viewBox="0 0 27 27" fill="none" stroke="#1b1b1b" stroke-width="2.6"><circle cx="11" cy="11" r="8.5"/><path d="M17 17l7.5 7.5" stroke-linecap="round"/></svg>
<div class="a" style="left:539px;top:853px;font-size:19.5px;color:#3a3a3a;white-space:nowrap">Search</div>
<svg class="a" style="left:749px;top:847px" width="44" height="36" viewBox="0 0 44 36">
<path d="M3 22C2 16 5 13 9 13L13 15V34H7C4 34 3 30 3 22Z" fill="#b8733a"/><path d="M5 26C3 29 4 33 7 34" stroke="#8a5a2a" stroke-width="1.5" fill="none"/>
<path d="M7 14L4 3M10 13L9 2M12 14L14 4" stroke="#a8a8b0" stroke-width="2"/>
<path d="M14 10C16 6 20 5 23 4H33C36 5 40 6 42 10L44 34H12Z" fill="#3fae47"/><path d="M18 20V34M39 20V34" stroke="#2f9038" stroke-width="1"/>
<path d="M23 4L27 16L29 8L33 4Z" fill="#2a8a34"/><path d="M27 16V34" stroke="#2f9038" stroke-width="1"/>
</svg>

<svg class="a" style="left:830px;top:847px" width="38" height="35" viewBox="0 0 38 35">
<rect x="10" y="0" width="27" height="24" rx="2" fill="#f1f1f1" stroke="#d9d9d9"/><rect x="0" y="10" width="27" height="24" rx="2" fill="#1c1c1c"/><rect x="10" y="10" width="17" height="14" fill="#c6c6c6"/>
</svg>
<svg class="a" style="left:896px;top:847px" width="38" height="34" viewBox="0 0 38 34">
<defs>
<linearGradient id="cpl" x1="0" y1="0" x2="0.3" y2="1"><stop offset="0" stop-color="#1b7ff0"/><stop offset="0.45" stop-color="#2cc08a"/><stop offset="1" stop-color="#f5c51a"/></linearGradient>
<linearGradient id="cpr" x1="0.7" y1="0" x2="0.3" y2="1"><stop offset="0" stop-color="#a24cf0"/><stop offset="0.5" stop-color="#f0509a"/><stop offset="1" stop-color="#f88a3a"/></linearGradient>
<linearGradient id="cpt" x1="0" y1="0" x2="1" y2="0"><stop offset="0" stop-color="#2a9af5"/><stop offset="1" stop-color="#1a4fd0"/></linearGradient>
<linearGradient id="cpb" x1="0" y1="0" x2="1" y2="0"><stop offset="0" stop-color="#f0502a"/><stop offset="1" stop-color="#f8a05a"/></linearGradient>
</defs>
<path d="M12 1H24C27 1 28 3 29 6L31 11H22L20 6C19 4 18 3 16 3H12Z" fill="url(#cpt)"/>
<path d="M10 1H16C18 1 19 3 18 5L11 29C10 32 9 33 6 33C2 33 0 30 1 26L5 10C6 4 7 1 10 1Z" fill="url(#cpl)"/>
<path d="M7 33H25C22 33 20 31 19 29L17 23H8L10 29C11 31 10 33 7 33Z" fill="url(#cpb)"/>
<path d="M22 33H28C31 33 32 30 33 25L37 10C38 6 36 3 32 3C29 3 28 4 27 7L20 29C19 31 20 33 22 33Z" fill="url(#cpr)"/>
</svg>
<svg class="a" style="left:962px;top:846px" width="38" height="36" viewBox="0 0 38 36">
<path d="M19 2A16 16 0 0 0 3 18" fill="none" stroke="#b7b7b7" stroke-width="5"/><path d="M24 3A16 16 0 0 1 35 18" fill="none" stroke="#b7b7b7" stroke-width="5"/>
<path d="M3 19c6-3 12 3 20 1c5-1 8-3 12-3c0 9-7 17-16 17S3 28 3 19z" fill="#3ec9c9"/><path d="M8 26c6 3 16 4 24-3" fill="none" stroke="#8fe3e3" stroke-width="2"/>
</svg>
<svg class="a" style="left:1029px;top:846px" width="36" height="36" viewBox="0 0 36 36">
<circle cx="18" cy="18" r="17.5" fill="#db4437"/>
<path d="M18 18L33.2 9.2A17.5 17.5 0 0 1 18 35.5z" fill="#ffcd40"/>
<path d="M18 18V35.5A17.5 17.5 0 0 1 2.8 9.2z" fill="#0f9d58"/>
<path d="M18 18L2.8 9.2A17.5 17.5 0 0 1 33.2 9.2z" fill="#db4437"/>
<circle cx="18" cy="18" r="8" fill="#fff"/><circle cx="18" cy="18" r="6.3" fill="#1a73e8"/>
</svg>
<svg class="a" style="left:1094px;top:847px" width="38" height="34" viewBox="0 0 38 34">
<path d="M1 3a2 2 0 0 1 2-2h10l4 4h18a2 2 0 0 1 2 2v25H1z" fill="#e8a915"/><rect x="1" y="8" width="36" height="26" rx="2" fill="#ffd34e"/>
<rect x="7" y="22" width="24" height="12" rx="2" fill="#1e88d6"/><rect x="13" y="25" width="12" height="2.5" rx="1" fill="#0c4f99"/>
</svg>
<svg class="a" style="left:1161px;top:846px" width="37" height="36" viewBox="0 0 37 36">
<defs><linearGradient id="eg1" x1="0" y1="1" x2="1" y2="0"><stop offset="0" stop-color="#0c59a4"/><stop offset="1" stop-color="#1b9de2"/></linearGradient></defs>
<path d="M18 1C28 1 36 8 36 17c0 6-5 9-10 9c-4 0-7-2-7-4c0-1 1-1 1-3c0-4-4-8-9-8c-6 0-10 5-10 9C2 9 9 1 18 1z" fill="#35c1f1"/>
<path d="M1 19c0 10 8 17 18 17c6 0 11-3 14-7c-6 3-14 2-18-3c-3-3-3-7-1-10c-5-2-13 0-13 3z" fill="url(#eg1)"/>
<path d="M36 17c0 6-5 9-10 9c-4 0-7-2-7-4c0-1 1-1 1-3c3 2 10 3 16-2z" fill="#51d66b"/>
</svg>
<div class="a" style="left:1217px;top:836px;width:56px;height:57px;border-radius:5px;background:rgba(255,255,255,0.55);border:1px solid rgba(255,255,255,0.7)"></div>
<svg class="a" style="left:1227px;top:846px" width="36" height="36" viewBox="0 0 36 36">
<circle cx="18" cy="18" r="17.5" fill="#db4437"/>
<path d="M18 18L33.2 9.2A17.5 17.5 0 0 1 18 35.5z" fill="#ffcd40"/>
<path d="M18 18V35.5A17.5 17.5 0 0 1 2.8 9.2z" fill="#0f9d58"/>
<path d="M18 18L2.8 9.2A17.5 17.5 0 0 1 33.2 9.2z" fill="#db4437"/>
<circle cx="18" cy="18" r="8" fill="#fff"/><circle cx="18" cy="18" r="6.3" fill="#1a73e8"/>
</svg>
<svg class="a" style="left:1245px;top:837px" width="26" height="26" viewBox="0 0 26 26">
<circle cx="13" cy="13" r="12.5" fill="#f2f4f8"/><circle cx="13" cy="13" r="11.5" fill="#6f8fa8"/>
<ellipse cx="13" cy="12" rx="5" ry="6" fill="#8a5a44"/><path d="M8 9c0-5 10-5 10 0c-2-2-8-2-10 0z" fill="#1e1818"/><path d="M3 25c2-6 6-7 10-7s8 1 10 7z" fill="#4a2a4a"/>
</svg>
<div class="a" style="left:1233px;top:888px;width:24px;height:4px;border-radius:2px;background:#0f6cbd"></div>
<svg class="a" style="left:1292px;top:847px" width="38" height="34" viewBox="0 0 38 34">
<rect x="9" y="1" width="28" height="32" rx="2" fill="#41a5ee"/><rect x="9" y="9" width="28" height="8" fill="#2b7cd3"/><rect x="9" y="17" width="28" height="8" fill="#185abd"/><rect x="9" y="25" width="28" height="8" rx="2" fill="#103f91"/>
<rect x="1" y="8" width="20" height="20" rx="2" fill="#185abd"/><path d="M4 12h2.5l1.8 9l2.2-9h1.8l2.2 9l1.8-9h2.5l-3 13h-2.3l-2-8.5l-2 8.5H7z" fill="#fff"/>
</svg>
<div class="a" style="left:1109px;top:889px;width:8px;height:4px;border-radius:2px;background:#6e6e78"></div>
<div class="a" style="left:1175px;top:889px;width:8px;height:4px;border-radius:2px;background:#6e6e78"></div>
<div class="a" style="left:1307px;top:889px;width:8px;height:4px;border-radius:2px;background:#6e6e78"></div>

<svg class="a" style="left:1445px;top:857px" width="20" height="13" viewBox="0 0 20 13" fill="none" stroke="#1b1b1b" stroke-width="2"><path d="M2 11l8-8l8 8"/></svg>
<svg class="a" style="left:1489px;top:853px" width="29" height="25" viewBox="0 0 29 25">
<path d="M6 19a5 5 0 0 1 0-10a7 7 0 0 1 13-2a5 5 0 0 1 3 9z" fill="#5b5b5b"/><path d="M6 18a4 4 0 0 1 1-8a6 6 0 0 1 11-1a4 4 0 0 1 3 7z" fill="#8a8a8a"/>
<circle cx="21" cy="17" r="6.5" fill="#c42b1c" stroke="#e4ebf6" stroke-width="1"/><path d="M18.5 14.5l5 5M23.5 14.5l-5 5" stroke="#fff" stroke-width="1.6"/>
</svg>
<svg class="a" style="left:1538px;top:850px" width="27" height="28" viewBox="0 0 27 28" fill="none" stroke="#1b1b1b" stroke-width="1.5">
<path d="M4 14a9.5 9.5 0 0 1 17-6"/><path d="M21 3v5h-5"/><path d="M23 15a9.5 9.5 0 0 1-17 6"/><path d="M6 26v-5h5"/>
<circle cx="20" cy="21" r="5.5" fill="#f7930e" stroke="#e4ebf6" stroke-width="1"/>
</svg>
<svg class="a" style="left:1589px;top:851px" width="20" height="26" viewBox="0 0 20 26" fill="none" stroke="#1a5fc2" stroke-width="2.2">
<rect x="6" y="1.5" width="8" height="14" rx="4"/><path d="M2 12a8 8 0 0 0 16 0M10 20v5"/>
</svg>
<div class="a" style="left:1638px;top:842px;font-size:17.5px;color:#1b1b1b;white-space:nowrap;text-align:center;width:36px;line-height:23px">ENG<br>IN</div>
<svg class="a" style="left:1699px;top:850px" width="28" height="28" viewBox="0 0 28 28" fill="none" stroke="#1b1b1b" stroke-width="1.5">
<path d="M18 20H4a2 2 0 0 1-2-2V6a2 2 0 0 1 2-2h14"/><path d="M8 20v4M5 24h12"/><rect x="20" y="2" width="5.5" height="6" rx="1.5"/><path d="M22.8 8v18"/>
</svg>
<svg class="a" style="left:1735px;top:853px" width="28" height="22" viewBox="0 0 28 22" fill="none" stroke="#1b1b1b" stroke-width="1.5">
<path d="M2 8h4l6-5v16l-6-5H2z"/><path d="M16 7.5a4.5 4.5 0 0 1 0 7"/><path d="M19.5 4.5a9 9 0 0 1 0 13"/><path d="M23 1.5a13 13 0 0 1 0 19"/>
</svg>
<div class="a" style="left:1778px;top:841px;font-size:18.2px;color:#1b1b1b;white-space:nowrap;text-align:right;width:101px;line-height:24px">17:25<br>10-04-2025</div>

</body></html>
